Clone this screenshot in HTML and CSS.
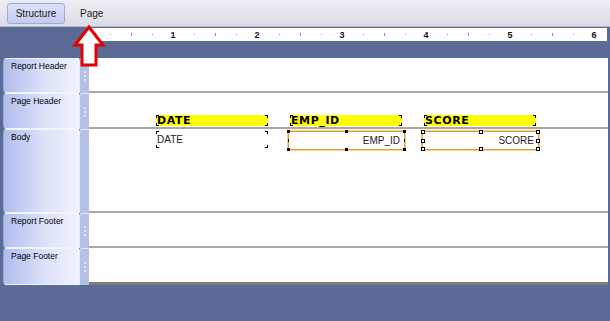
FILE: index.html
```html
<!DOCTYPE html>
<html lang="en">
<head>
    <meta charset="UTF-8">
    <title>Report Designer</title>
    <link rel="stylesheet" href="styles.css">
</head>
<body>
    <div class="tabs">
        <span class="tab active">Structure</span>
        <span class="tab">Page</span>
    </div>

    <div class="ruler-band">
        <svg class="ruler" width="518" height="13" viewBox="0 0 518 13">
            <g fill="#8a8a8a">
                <rect x="21" y="6" width="1" height="1"/><rect x="42" y="5" width="1" height="3"/><rect x="63" y="6" width="1" height="1"/>
                <rect x="105" y="6" width="1" height="1"/><rect x="126" y="5" width="1" height="3"/><rect x="147" y="6" width="1" height="1"/>
                <rect x="190" y="6" width="1" height="1"/><rect x="211" y="5" width="1" height="3"/><rect x="232" y="6" width="1" height="1"/>
                <rect x="274" y="6" width="1" height="1"/><rect x="295" y="5" width="1" height="3"/><rect x="316" y="6" width="1" height="1"/>
                <rect x="358" y="6" width="1" height="1"/><rect x="379" y="5" width="1" height="3"/><rect x="400" y="6" width="1" height="1"/>
                <rect x="442" y="6" width="1" height="1"/><rect x="463" y="5" width="1" height="3"/><rect x="484" y="6" width="1" height="1"/>
            </g>
            <g class="ruler-num" text-anchor="middle">
                <text x="84" y="10">1</text>
                <text x="168" y="10">2</text>
                <text x="253" y="10">3</text>
                <text x="337" y="10">4</text>
                <text x="421" y="10">5</text>
                <text x="505" y="10">6</text>
            </g>
        </svg>
    </div>

    <div class="sections">
        <div class="section rh">
            <div class="label">Report Header</div>
            <div class="grip"><span class="dots"></span></div>
            <div class="canvas"></div>
        </div>

        <div class="section ph">
            <div class="label">Page Header</div>
            <div class="grip"><span class="dots"></span></div>
            <div class="canvas">
                <div class="field head f-date">DATE</div>
                <div class="field head f-emp">EMP_ID</div>
                <div class="field head f-score">SCORE</div>
            </div>
        </div>

        <div class="section bd">
            <div class="label">Body</div>
            <div class="grip"></div>
            <div class="canvas">
                <div class="field cell c-date">DATE</div>
                <div class="field cell sel c-emp">EMP_ID
                    <span class="h tl"></span><span class="h tm"></span><span class="h tr"></span>
                    <span class="h bl"></span><span class="h bm"></span><span class="h br"></span>
                    <span class="tick ml"></span><span class="tick mr"></span>
                </div>
                <div class="field cell sel primary c-score">SCORE
                    <span class="h tl"></span><span class="h tm"></span><span class="h tr"></span>
                    <span class="h ml"></span><span class="h mr"></span>
                    <span class="h bl"></span><span class="h bm"></span><span class="h br"></span>
                </div>
            </div>
        </div>

        <div class="section rf">
            <div class="label">Report Footer</div>
            <div class="grip"><span class="dots"></span></div>
            <div class="canvas"></div>
        </div>

        <div class="section pf">
            <div class="label">Page Footer</div>
            <div class="grip"><span class="dots"></span></div>
            <div class="canvas"></div>
        </div>
    </div>

    <svg class="arrow" width="120" height="80" viewBox="0 0 120 80">
        <path d="M89 27 L103 45 L96 45 L96 65 L82 65 L82 45 L75 45 Z" fill="#fff" stroke="#e60000" stroke-width="3" stroke-linejoin="miter"/>
    </svg>
</body>
</html>
```

FILE: styles.css
```css
body {
    margin: 0;
    width: 610px;
    height: 321px;
    background: #5b6b95;
    font-family: "Liberation Sans", Arial, sans-serif;
    position: relative;
    overflow: hidden;
}

/* top tabs */
.tabs {
    height: 27px;
    box-sizing: border-box;
    background: linear-gradient(#eeedf4, #dddce7);
    border-bottom: 1px solid #b4b9cc;
    display: flex;
    align-items: center;
    padding-left: 7px;
    gap: 15px;
}
.tab {
    font-size: 10px;
    color: #1c1c1c;
}
.tab.active {
    width: 58px;
    height: 21px;
    box-sizing: border-box;
    display: flex;
    align-items: center;
    justify-content: center;
    background: linear-gradient(#dde2fb, #c2caf1);
    border: 1px solid #9ca7da;
    border-radius: 3px;
}

/* ruler */
.ruler-band {
    height: 31px;
    box-sizing: border-box;
    padding: 1px 0 0 89px;
}
.ruler {
    display: block;
    background: #fff;
}
.ruler-num text {
    font-family: "Liberation Sans", Arial, sans-serif;
    font-size: 9px;
    font-weight: bold;
    fill: #111;
}

/* sections */
.section {
    display: flex;
    margin-right: 2px;
}
.rh { height: 35px; }
.ph { height: 36px; }
.bd { height: 84px; }
.rf { height: 35px; }
.pf { height: 37px; }

.label {
    width: 76px;
    margin-left: 3px;
    box-sizing: border-box;
    padding: 2px 0 0 7px;
    font-size: 8.5px;
    color: #000;
    background: linear-gradient(90deg, #b0bcec, #dde2fa 55%, #eff1fd);
    border: 1px solid #f4f6ff;
    border-left-color: #97a4d8;
    border-radius: 4px 0 0 4px;
}
.grip {
    width: 10px;
    box-sizing: border-box;
    background: #b3c1e8;
    border-left: 1px solid #e6ebfa;
    border-top: 1px solid #e6ebfa;
    border-radius: 3px 0 0 0;
    display: flex;
    align-items: center;
    justify-content: center;
}
.dots {
    width: 2px;
    height: 10px;
    background: repeating-linear-gradient(#dfe5f6 0 2px, transparent 2px 4px);
}
.canvas {
    flex: 1;
    position: relative;
    background: #fff;
    border-bottom: 2px solid #aaa99e;
}
.pf .canvas {
    border-bottom: 3px solid #7d7d76;
}

/* report fields */
.field {
    position: absolute;
    box-sizing: border-box;
}
.head {
    top: 22px;
    width: 112px;
    height: 11px;
    padding-left: 1px;
    background-color: #ffff00;
    font-family: "DejaVu Sans", sans-serif;
    font-weight: bold;
    font-size: 11px;
    line-height: 11px;
    letter-spacing: 0.6px;
    color: #000;
}
.head,
.c-date {
    background-image:
        linear-gradient(#000, #000), linear-gradient(#000, #000),
        linear-gradient(#000, #000), linear-gradient(#000, #000),
        linear-gradient(#000, #000), linear-gradient(#000, #000),
        linear-gradient(#000, #000), linear-gradient(#000, #000);
    background-repeat: no-repeat;
    background-size: 3px 1px, 1px 3px, 3px 1px, 1px 3px, 3px 1px, 1px 3px, 3px 1px, 1px 3px;
    background-position: left top, left top, right top, right top, left bottom, left bottom, right bottom, right bottom;
}
.f-date { left: 67px; }
.f-emp { left: 201px; }
.f-score { left: 335px; }

.cell {
    top: 2px;
    font-size: 10px;
    color: #222;
}
.c-date {
    left: 67px;
    width: 112px;
    height: 17px;
    line-height: 17px;
    padding-left: 1px;
}
.sel {
    width: 117px;
    height: 19px;
    line-height: 17px;
    text-align: right;
    padding-right: 4px;
    border: 1px solid #eb9b2c;
    outline: 1px solid #f8cf8e;
}
.c-emp { left: 199px; }
.c-score { left: 333px; }

.h {
    position: absolute;
    width: 3px;
    height: 3px;
    background: #000;
}
.primary .h {
    width: 4px;
    height: 4px;
    box-sizing: border-box;
    background: #fff;
    border: 1px solid #000;
}
.tl { left: -2px; top: -2px; }
.tm { left: 56px; top: -2px; }
.tr { right: -2px; top: -2px; }
.bl { left: -2px; bottom: -2px; }
.bm { left: 56px; bottom: -2px; }
.br { right: -2px; bottom: -2px; }
.ml { left: -2px; top: 7px; }
.mr { right: -2px; top: 7px; }
.tick {
    position: absolute;
    width: 1px;
    height: 3px;
    background: #000;
}
.tick.ml { left: -1px; }
.tick.mr { right: -1px; }

/* annotation arrow */
.arrow {
    position: absolute;
    left: 0;
    top: 0;
    pointer-events: none;
}
```
